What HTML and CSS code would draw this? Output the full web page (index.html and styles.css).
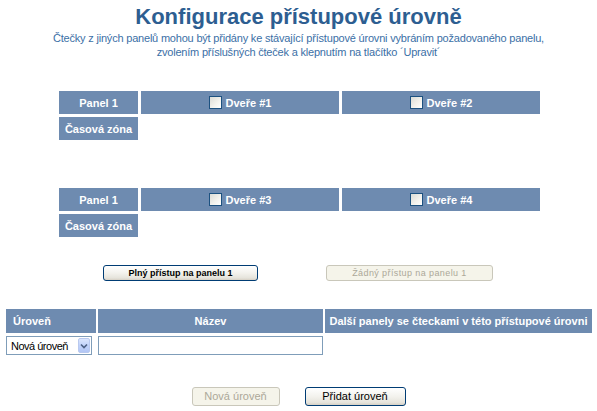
FILE: index.html
```html
<!DOCTYPE html>
<html lang="cs">
<head>
<meta charset="utf-8">
<title>Konfigurace přístupové úrovně</title>
<link rel="stylesheet" href="styles.css">
</head>
<body>
<h1 class="title">Konfigurace přístupové úrovně</h1>
<p class="intro">Čtečky z jiných panelů mohou být přidány ke stávající přístupové úrovni vybráním požadovaného panelu,<br>zvolením příslušných čteček a klepnutím na tlačítko ´Upravit´</p>

<div class="doors first">
  <div class="hdr">Panel 1</div>
  <div class="hdr"><span class="cb"></span><span>Dveře #1</span></div>
  <div class="hdr"><span class="cb"></span><span>Dveře #2</span></div>
  <div class="hdr">Časová zóna</div>
  <div class="empty"></div>
  <div class="empty"></div>
</div>

<div class="doors second">
  <div class="hdr">Panel 1</div>
  <div class="hdr"><span class="cb"></span><span>Dveře #3</span></div>
  <div class="hdr"><span class="cb"></span><span>Dveře #4</span></div>
  <div class="hdr">Časová zóna</div>
  <div class="empty"></div>
  <div class="empty"></div>
</div>

<div class="panel-actions">
  <button class="btn small bold full">Plný přístup na panelu 1</button>
  <button class="btn small none" disabled>Žádný přístup na panelu 1</button>
</div>

<div class="levels">
  <div class="hdr left">Úroveň</div>
  <div class="hdr">Název</div>
  <div class="hdr">Další panely se čteckami v této přístupové úrovni</div>
  <div class="select"><span class="sel-text">Nová úroveň</span><span class="sel-arrow"><svg width="8" height="6" viewBox="0 0 8 6"><path d="M1 1.5 L4 4.5 L7 1.5" fill="none" stroke="#4d6185" stroke-width="1.6"/></svg></span></div>
  <div class="input"></div>
  <div class="empty"></div>
</div>

<div class="actions">
  <button class="btn normal new" disabled>Nová úroveň</button>
  <button class="btn normal add">Přidat úroveň</button>
</div>
</body>
</html>
```
FILE: styles.css
```css
html, body {
  margin: 0;
  padding: 0;
  background: #ffffff;
}
body {
  width: 597px;
  font-family: "Liberation Sans", Arial, sans-serif;
}
.title {
  margin: 0;
  padding-top: 4px;
  font-size: 22px;
  line-height: 25px;
  font-weight: bold;
  color: #2d5e91;
  text-align: center;
}
.intro {
  margin: 2px 0 0;
  font-size: 11px;
  line-height: 14px;
  color: #3b6fa6;
  text-align: center;
  letter-spacing: -0.2px;
}
.doors {
  display: grid;
  grid-template-columns: 79px 198px 198px;
  grid-auto-rows: 23px;
  gap: 3px 3px;
  width: 481px;
  margin-left: 59px;
}
.doors.first { margin-top: 32px; }
.doors.second { margin-top: 48px; }
.hdr {
  background: #6e8bb0;
  color: #ffffff;
  font-size: 11px;
  font-weight: bold;
  display: flex;
  align-items: center;
  justify-content: center;
  gap: 4px;
  white-space: nowrap;
}
.hdr.left {
  justify-content: flex-start;
  padding-left: 7px;
}
.cb {
  display: inline-block;
  width: 11px;
  height: 11px;
  border: 1px solid #1c5180;
  background: linear-gradient(135deg, #dcdcd6 0%, #f4f3ee 60%, #ffffff 100%);
}
.panel-actions {
  display: flex;
  margin-top: 28px;
  padding-left: 103px;
  gap: 68px;
}
.btn {
  box-sizing: border-box;
  font-family: "Liberation Sans", Arial, sans-serif;
  border: 1px solid #003c74;
  border-radius: 3px;
  background: linear-gradient(#ffffff 0%, #f3f2ed 50%, #e6e4dc 85%, #d6d0c5 100%);
  color: #000;
  padding: 0;
  margin: 0;
  cursor: pointer;
}
.btn[disabled] {
  border-color: #c9c7ba;
  background: #f5f4ea;
  color: #aca899;
  cursor: default;
}
.btn.small {
  height: 16px;
  font-size: 9px;
  line-height: 14px;
}
.btn.bold { font-weight: bold; }
.btn.full { width: 155px; }
.btn.none { width: 167px; letter-spacing: 0.4px; }
.levels {
  display: grid;
  grid-template-columns: 90px 225px 267px;
  grid-template-rows: 24px 19px;
  gap: 3px 2px;
  margin-top: 28px;
  margin-left: 6px;
}
.select {
  box-sizing: border-box;
  width: 86px;
  height: 19px;
  border: 1px solid #7f9db9;
  background: #fff;
  display: flex;
  align-items: center;
  padding: 1px;
}
.sel-text {
  flex: 1;
  padding-left: 3px;
  font-size: 11px;
  letter-spacing: -0.5px;
  color: #000;
  white-space: nowrap;
}
.sel-arrow {
  width: 12px;
  height: 15px;
  box-sizing: border-box;
  border: 1px solid #b9c9ef;
  border-radius: 2px;
  background: linear-gradient(#dce6fd, #c1d3fb 50%, #b2c6f5);
  display: flex;
  align-items: center;
  justify-content: center;
}
.input {
  box-sizing: border-box;
  width: 225px;
  height: 19px;
  border: 1px solid #7f9db9;
  background: #fff;
}
.actions {
  display: flex;
  justify-content: center;
  gap: 25px;
  margin-top: 32px;
}
.btn.normal {
  height: 19px;
  font-size: 11px;
  line-height: 17px;
}
.btn.new { width: 88px; }
.btn.add { width: 101px; }
```
